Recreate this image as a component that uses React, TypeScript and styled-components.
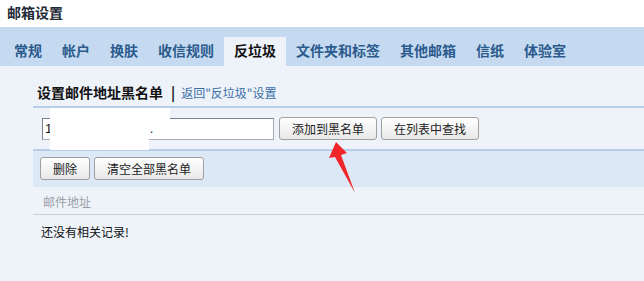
import * as React from "react"
import styled, {createGlobalStyle} from "styled-components"

const GlobalStyle = createGlobalStyle`
    html, body {
        margin: 0;
        padding: 0;
        background: #eef3fa;
    }
    body {
        font-family: "Noto Sans CJK SC", "Liberation Sans", sans-serif;
    }
`

const tabs = ["常规", "帐户", "换肤", "收信规则", "反垃圾", "文件夹和标签", "其他邮箱", "信纸", "体验室"]
const activeTab = "反垃圾"

// the address in the screenshot is blanked out apart from its first digit and a dot
const maskedAddress = "1" + " ".repeat(27) + "."

const Page = styled.div`
    position: relative;
    width: 644px;
    height: 281px;
    overflow: hidden;
    background: #eef3fa;
`

const Header = styled.div`
    height: 27px;
    line-height: 25px;
    padding-left: 7px;
    background: #fff;
    font-size: 14px;
    font-weight: bold;
    color: #1e2a36;
`

const TabBar = styled.div`
    display: flex;
    align-items: flex-end;
    height: 39px;
    padding-left: 4px;
    background: #c5daf1;
`

const Tab = styled.div<{$active?: boolean}>`
    height: 29px;
    line-height: 27px;
    padding: 0 10px;
    font-size: 14px;
    font-weight: bold;
    color: ${props => props.$active ? "#111" : "#2b5a8c"};
    background: ${props => props.$active ? "#eef3fa" : "transparent"};
`

const Body = styled.div`
    padding-left: 33px;
`

const TitleRow = styled.div`
    display: flex;
    align-items: center;
    height: 28px;
    padding: 12px 0 0 4px;
    border-bottom: 2px solid #b8cee8;
`

const Title = styled.span`
    font-size: 14px;
    font-weight: bold;
    color: #111;
`

const Sep = styled.span`
    margin: 0 6px 0 8px;
    font-size: 14px;
    font-weight: bold;
    color: #111;
`

const BackLink = styled.a`
    font-size: 12px;
    color: #3a6ea8;
    text-decoration: none;
`

const InputRow = styled.div`
    display: flex;
    align-items: center;
    gap: 4px;
    height: 41px;
    padding-left: 9px;
    border-bottom: 2px solid #b8cee8;
`

const AddressInput = styled.input`
    box-sizing: border-box;
    width: 232px;
    height: 22px;
    margin: 0 1px 0 0;
    padding: 0 2px;
    border: 1px solid #a5acb5;
    border-top-color: #7b838c;
    border-left-color: #7b838c;
    background: #fff;
    font-family: "Liberation Sans", sans-serif;
    font-size: 13px;
    color: #111;
    outline: none;
`

const Button = styled.button`
    box-sizing: border-box;
    height: 23px;
    margin: 0;
    padding: 0 12px;
    border: 1px solid #a0a0a0;
    border-radius: 3px;
    background: linear-gradient(#ffffff, #e8e8e8);
    font-family: "Noto Sans CJK SC", sans-serif;
    font-size: 12px;
    color: #222;
    line-height: 21px;
`

const Toolbar = styled.div`
    display: flex;
    align-items: center;
    gap: 4px;
    height: 35px;
    padding: 0 0 1px 7px;
    background: #dde8f6;
`

const ColumnHeader = styled.div`
    height: 27px;
    line-height: 29px;
    padding-left: 10px;
    font-size: 12px;
    color: #9aa0a8;
    border-bottom: 1px solid #c9ced6;
`

const EmptyRow = styled.div`
    padding: 8px 0 0 8px;
    line-height: 18px;
    font-size: 12px;
    color: #111;
`

const Redact = styled.div`
    position: absolute;
    background: #fff;
`

const Arrow = styled.svg`
    position: absolute;
    left: 0;
    top: 0;
    pointer-events: none;
`

export default function App() {
    return (
        <Page>
            <GlobalStyle />
            <Header>邮箱设置</Header>
            <TabBar>
                {tabs.map(t => (
                    <Tab key={t} $active={t === activeTab}>{t}</Tab>
                ))}
            </TabBar>
            <Body>
                <TitleRow>
                    <Title>设置邮件地址黑名单</Title>
                    <Sep>|</Sep>
                    <BackLink href="#">返回"反垃圾"设置</BackLink>
                </TitleRow>
                <InputRow>
                    <AddressInput defaultValue={maskedAddress} />
                    <Button>添加到黑名单</Button>
                    <Button>在列表中查找</Button>
                </InputRow>
                <Toolbar>
                    <Button>删除</Button>
                    <Button>清空全部黑名单</Button>
                </Toolbar>
                <ColumnHeader>邮件地址</ColumnHeader>
                <EmptyRow>还没有相关记录!</EmptyRow>
            </Body>
            <Redact style={{left: 50, top: 108, width: 120, height: 20}} />
            <Redact style={{left: 50, top: 128, width: 99, height: 22}} />
            <Arrow width="644" height="281" viewBox="0 0 644 281">
                <polygon points="336,142 347,153 341,155 355,193 335,157 329,158" fill="#f0262a" />
            </Arrow>
        </Page>
    )
}
